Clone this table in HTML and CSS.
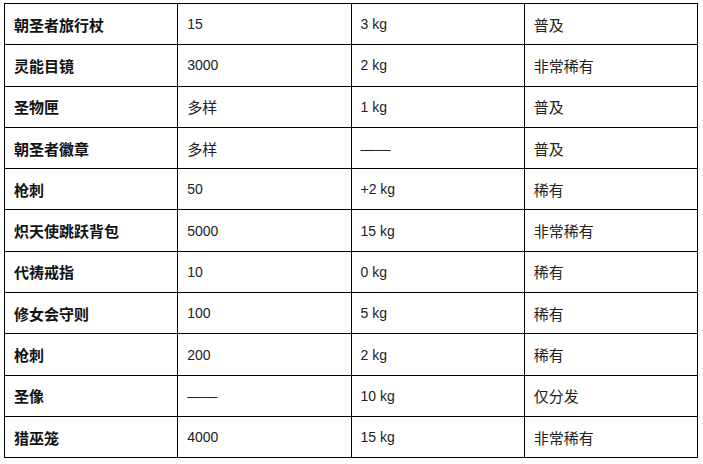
FILE: index.html
```html
<!DOCTYPE html>
<html lang="zh">
<head>
<meta charset="utf-8">
<link rel="stylesheet" href="styles.css">
</head>
<body>
<table class="items">
  <tbody>
    <tr><td class="name">朝圣者旅行杖</td><td>15</td><td>3 kg</td><td class="zh">普及</td></tr>
    <tr><td class="name">灵能目镜</td><td>3000</td><td>2 kg</td><td class="zh">非常稀有</td></tr>
    <tr><td class="name">圣物匣</td><td class="zh">多样</td><td>1 kg</td><td class="zh">普及</td></tr>
    <tr><td class="name">朝圣者徽章</td><td class="zh">多样</td><td class="zh">——</td><td class="zh">普及</td></tr>
    <tr><td class="name">枪刺</td><td>50</td><td>+2 kg</td><td class="zh">稀有</td></tr>
    <tr><td class="name">炽天使跳跃背包</td><td>5000</td><td>15 kg</td><td class="zh">非常稀有</td></tr>
    <tr><td class="name">代祷戒指</td><td>10</td><td>0 kg</td><td class="zh">稀有</td></tr>
    <tr><td class="name">修女会守则</td><td>100</td><td>5 kg</td><td class="zh">稀有</td></tr>
    <tr><td class="name">枪刺</td><td>200</td><td>2 kg</td><td class="zh">稀有</td></tr>
    <tr><td class="name">圣像</td><td class="zh">——</td><td>10 kg</td><td class="zh">仅分发</td></tr>
    <tr><td class="name">猎巫笼</td><td>4000</td><td>15 kg</td><td class="zh">非常稀有</td></tr>
  </tbody>
</table>
</body>
</html>
```
FILE: styles.css
```css
html, body {
  background: #fff;
}
body {
  margin: 3px 5px 0 4px;
  font-family: "Liberation Sans", "Noto Sans CJK SC", sans-serif;
  font-size: 14px;
  color: #222;
}
.items {
  width: 694px;
  border-collapse: collapse;
  table-layout: fixed;
}
.items td {
  border: 1px solid #000;
  height: 41.3px;
  padding: 0 9px;
  vertical-align: middle;
  text-align: left;
  box-sizing: border-box;
}
.items td.zh {
  font-size: 15px;
}
.items td.name {
  font-size: 15px;
  font-weight: bold;
  color: #111;
}
```
